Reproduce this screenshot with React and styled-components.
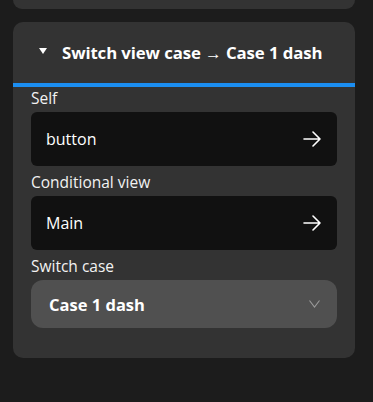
import React from "react";
import styled, { createGlobalStyle } from "styled-components";

const Global = createGlobalStyle`
  html, body {
    margin: 0;
    padding: 0;
    background: #1c1c1c;
    height: 100%;
  }
  body {
    font-family: "Open Sans", "Noto Sans", sans-serif;
    color: #fff;
  }
`;

const Page = styled.div`
  width: 373px;
  height: 402px;
  padding: 0 18px 0 13px;
  box-sizing: border-box;
  display: flex;
  flex-direction: column;
  gap: 13px;
`;

const TopCard = styled.div`
  height: 9px;
  background: #333333;
  border-radius: 0 0 10px 10px;
`;

const Card = styled.div`
  background: #333333;
  border-radius: 10px;
  padding-bottom: 30px;
`;

const Header = styled.div`
  height: 61px;
  display: flex;
  align-items: center;
  gap: 15px;
  padding-left: 26px;
  border-bottom: 4px solid #1b8ef2;
  font-weight: 700;
  font-size: 16.8px;
  letter-spacing: -0.1px;
`;

const Caret = styled.span`
  width: 0;
  height: 0;
  border-left: 4px solid transparent;
  border-right: 4px solid transparent;
  border-top: 6px solid #fff;
  margin-top: -3px;
`;

const Body = styled.div`
  padding: 1px 18px 0;
  display: flex;
  flex-direction: column;
`;

const Label = styled.div`
  font-size: 15.5px;
  line-height: 21px;
  margin: 0 0 3px;
  color: #f2f2f2;
`;

const LinkBox = styled.div`
  height: 54px;
  background: #111111;
  border-radius: 6px;
  display: flex;
  align-items: center;
  justify-content: space-between;
  padding: 0 16px 0 15px;
  font-size: 16px;
  margin-bottom: 6px;
`;

const Select = styled.div`
  height: 48px;
  background: #505050;
  border-radius: 12px;
  display: flex;
  align-items: center;
  justify-content: space-between;
  padding: 0 17px 0 18px;
  font-weight: 700;
  font-size: 16.5px;
`;

const Arrow = () => (
  <svg width="18" height="16" viewBox="0 0 18 16" fill="none" stroke="#fff" strokeWidth="1.6" strokeLinecap="round" strokeLinejoin="round">
    <path d="M1 8h16M10 1l7 7-7 7" />
  </svg>
);

const Chevron = () => (
  <svg width="11" height="8" viewBox="0 0 11 8" fill="none" stroke="#9a9a9a" strokeWidth="1.1">
    <path d="M0.5 0.5l5 6.5 5-6.5" />
  </svg>
);

export default function App() {
  return (
    <>
      <Global />
      <Page>
        <TopCard />
        <Card>
          <Header>
            <Caret />
            <span>Switch view case → Case 1 dash</span>
          </Header>
          <Body>
            <Label>Self</Label>
            <LinkBox>
              <span>button</span>
              <Arrow />
            </LinkBox>
            <Label>Conditional view</Label>
            <LinkBox>
              <span>Main</span>
              <Arrow />
            </LinkBox>
            <Label>Switch case</Label>
            <Select>
              <span>Case 1 dash</span>
              <Chevron />
            </Select>
          </Body>
        </Card>
      </Page>
    </>
  );
}
